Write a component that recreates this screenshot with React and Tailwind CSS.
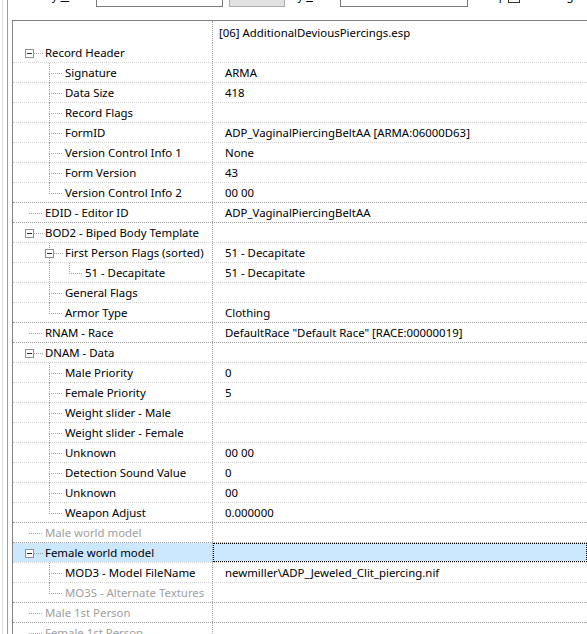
import React from "react";

const rows = [
    { d: 0, label: "Record Header", box: true },
    { d: 1, label: "Signature", value: "ARMA" },
    { d: 1, label: "Data Size", value: "418" },
    { d: 1, label: "Record Flags" },
    { d: 1, label: "FormID", value: "ADP_VaginalPiercingBeltAA [ARMA:06000D63]" },
    { d: 1, label: "Version Control Info 1", value: "None" },
    { d: 1, label: "Form Version", value: "43" },
    { d: 1, label: "Version Control Info 2", value: "00 00" },
    { d: 0, label: "EDID - Editor ID", value: "ADP_VaginalPiercingBeltAA" },
    { d: 0, label: "BOD2 - Biped Body Template", box: true },
    { d: 1, label: "First Person Flags (sorted)", value: "51 - Decapitate", box: true },
    { d: 2, label: "51 - Decapitate", value: "51 - Decapitate" },
    { d: 1, label: "General Flags" },
    { d: 1, label: "Armor Type", value: "Clothing" },
    { d: 0, label: "RNAM - Race", value: 'DefaultRace "Default Race" [RACE:00000019]' },
    { d: 0, label: "DNAM - Data", box: true },
    { d: 1, label: "Male Priority", value: "0" },
    { d: 1, label: "Female Priority", value: "5" },
    { d: 1, label: "Weight slider - Male" },
    { d: 1, label: "Weight slider - Female" },
    { d: 1, label: "Unknown", value: "00 00" },
    { d: 1, label: "Detection Sound Value", value: "0" },
    { d: 1, label: "Unknown", value: "00" },
    { d: 1, label: "Weapon Adjust", value: "0.000000" },
    { d: 0, label: "Male world model", gray: true },
    { d: 0, label: "Female world model", box: true, selected: true },
    { d: 1, label: "MOD3 - Model FileName", value: "newmiller\\ADP_Jeweled_Clit_piercing.nif" },
    { d: 1, label: "MO3S - Alternate Textures", gray: true },
    { d: 0, label: "Male 1st Person", gray: true },
    { d: 0, label: "Female 1st Person", gray: true },
];

// does a sibling at depth k follow row i?
const continues = (i, k) => {
    for (let j = i + 1; j < rows.length; j++) {
        if (rows[j].d < k) return false;
        if (rows[j].d === k) return true;
    }
    return false;
};

const TreeLines = ({ row, i }) => {
    const lines = [];
    for (let k = 1; k <= row.d; k++) {
        const x = 16.5 + 20 * k;
        if (k < row.d) {
            if (continues(i, k)) lines.push(<line key={"v" + k} x1={x} y1={0} x2={x} y2={20} />);
        } else {
            lines.push(<line key={"t" + k} x1={x} y1={0} x2={x} y2={10.5} />);
            if (continues(i, k)) lines.push(<line key={"b" + k} x1={x} y1={10.5} x2={x} y2={20} />);
        }
    }
    const ox = 20 * row.d;
    lines.push(<line key="h" x1={row.box ? 21 + ox : 16 + ox} y1={10.5} x2={30 + ox} y2={10.5} />);

    return (
        <svg width="199" height="20" className="absolute left-0 top-0 overflow-visible">
            <g stroke="#a0a0a0" strokeDasharray="1 1" shapeRendering="crispEdges">{lines}</g>
            {row.box && (
                <g shapeRendering="crispEdges">
                    <rect x={12.5 + ox} y={6.5} width={8} height={8} fill="#ffffff" stroke="#919191" />
                    <line x1={14 + ox} y1={10.5} x2={19 + ox} y2={10.5} stroke="#2b2b2b" />
                </g>
            )}
        </svg>
    );
};

const Row = ({ row, i }) => {
    const next = rows[i + 1];
    const dark = !next || next.d === 0;
    return (
        <div className={`flex h-[20px] border-b border-dotted ${dark ? "border-[#a3a3a3]" : "border-[#d2d2d2]"}`}>
            <div className={`relative w-[200px] shrink-0 border-r border-dotted border-[#a0a0a0] ${row.selected ? "bg-[#cce8ff]" : ""}`}>
                <TreeLines row={row} i={i} />
                <div
                    className={`relative whitespace-nowrap leading-[20px] ${row.gray ? "text-[#a0a0a0]" : "text-black"}`}
                    style={{ paddingLeft: 32 + 20 * row.d }}
                >
                    {row.label}
                </div>
            </div>
            <div className={`flex-1 whitespace-nowrap pl-[12px] leading-[20px] text-black ${row.selected ? "border border-dotted border-black bg-[#cce8ff] pl-[11px] leading-[18px]" : ""}`}>
                {row.value}
            </div>
        </div>
    );
};

export default function App() {
    return (
        <div
            className="flex h-[634px] w-[587px] overflow-hidden bg-white text-[11.4px]"
            style={{ fontFamily: '"Noto Sans", "Segoe UI", sans-serif' }}
        >
            <div className="flex w-[12px] shrink-0">
                <div className="w-[3px] border-r border-[#dcdcdc]" />
                <div className="w-[5px] border-r border-[#9d9d9d]" />
            </div>
            <div className="flex min-w-0 flex-1 flex-col">
                <div className="h-[20px] shrink-0 overflow-hidden">
                    <div className="-mt-[15px] flex h-[22px] items-center whitespace-nowrap pl-[3px] text-black">
                        <span className="w-[86px]">Filter by <u>N</u>ame:</span>
                        <div className="h-[22px] w-[136px] border border-[#7a7a7a] bg-white" />
                        <div className="ml-[6px] flex h-[22px] w-[59px] items-center justify-center border border-[#adadad] bg-[#e1e1e1]">and</div>
                        <span className="ml-[6px] w-[53px]">by <u>V</u>alue:</span>
                        <div className="h-[22px] w-[136px] border border-[#7a7a7a] bg-white" />
                        <span className="ml-[11px] w-[31px]">Keep</span>
                        <div className="h-[13px] w-[13px] border border-[#333333] bg-white" />
                        <span className="ml-[5px]">Unchanged</span>
                    </div>
                </div>
                <div className="flex-1 border-l border-t border-[#828282]">
                    <div className="flex h-[22px]">
                        <div className="w-[200px] shrink-0 border-r border-dotted border-[#a0a0a0]" />
                        <div className="flex-1 whitespace-nowrap pl-[6px] pt-[1px] leading-[22px] text-black">[06] AdditionalDeviousPiercings.esp</div>
                    </div>
                    {rows.map((row, i) => (
                        <Row key={i} row={row} i={i} />
                    ))}
                </div>
            </div>
        </div>
    );
}
